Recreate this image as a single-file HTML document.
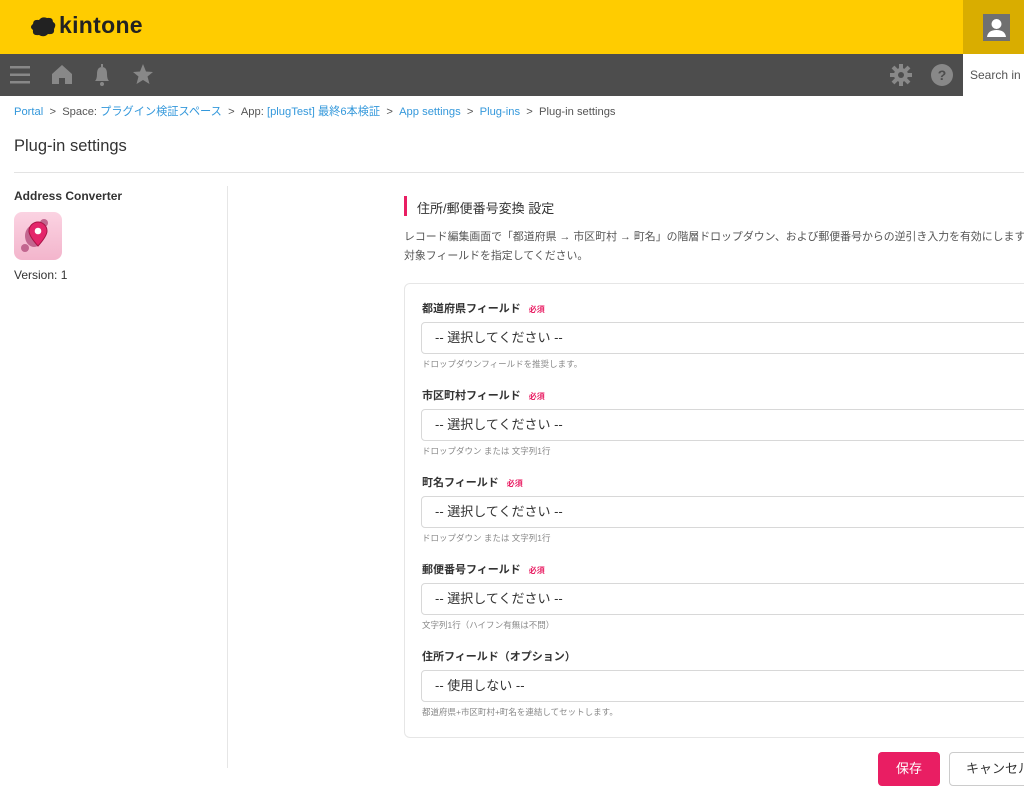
<!DOCTYPE html>
<html><head><meta charset="utf-8"><style>
*{margin:0;padding:0;box-sizing:border-box}
body{width:1024px;height:768px;overflow:hidden;background:#fff;font-family:"Liberation Sans","Noto Sans CJK JP",sans-serif;color:#333;position:relative}
.abs{position:absolute}
a{color:#3498db;text-decoration:none}
.lbl{position:absolute;left:422px;font-size:11px;font-weight:bold;color:#333}
.req{color:#e91e63;font-size:8px;margin-left:8px;font-weight:bold}
.sel{position:absolute;left:421px;width:620px;height:32px;border:1px solid #d8d8d8;border-radius:4px;font-size:13px;padding-left:13px;line-height:30px;color:#333}
.hint{position:absolute;left:422px;font-size:8.5px;color:#888}
</style></head><body>
<div class="abs" style="left:0;top:0;width:1024px;height:54px;background:#ffcc00"></div>
<div class="abs" style="left:963px;top:0;width:61px;height:54px;background:#d9ad00"></div>
<div class="abs" style="left:983px;top:14px;width:27px;height:27px;background:#707070"></div>
<svg class="abs" style="left:983px;top:14px" width="27" height="27"><circle cx="13.5" cy="10" r="5" fill="#fff"/><path d="M4 23 Q5 16 13.5 16 Q22 16 23 23Z" fill="#fff"/></svg>
<svg class="abs" style="left:29px;top:16px" width="28" height="22"><path d="M4 8 Q4 3 10 4 Q13 0 18 2 Q24 1 24 6 Q28 8 25 13 Q26 19 19 18 Q15 22 10 19 Q3 20 4 14 Q0 11 4 8Z" fill="#222"/></svg>
<div class="abs" style="left:59px;top:12px;font-size:23px;font-weight:bold;color:#222;letter-spacing:0.3px">kintone</div>
<div class="abs" style="left:0;top:54px;width:963px;height:42px;background:#4d4d4d"></div>
<div class="abs" style="left:963px;top:55px;width:61px;height:40px;background:#fff;font-size:12px;color:#555;padding:13px 0 0 7px;white-space:nowrap;overflow:hidden">Search in</div>
<svg class="abs" style="left:0;top:54px" width="170" height="42" fill="#888">
<rect x="10" y="12" width="20" height="2.5"/><rect x="10" y="19.5" width="20" height="2.5"/><rect x="10" y="27" width="20" height="2.5"/>
<path d="M52 20 L62 11 L72 20 L72 30 L65 30 L65 24 L59 24 L59 30 L52 30Z"/>
<path d="M95 27 Q97 25 97 20 Q97 13 102 13 Q107 13 107 20 Q107 25 109 27Z"/><circle cx="102" cy="30" r="2"/><rect x="101" y="10" width="2" height="3"/>
<path d="M143 10 L146 17.5 L153 18 L147.5 22.5 L149.5 30 L143 26 L136.5 30 L138.5 22.5 L133 18 L140 17.5Z"/>
</svg>
<svg class="abs" style="left:888px;top:62px" width="70" height="26" fill="#888">
<circle cx="13" cy="13" r="7"/><g stroke="#888" stroke-width="4"><line x1="13" y1="2" x2="13" y2="24"/><line x1="2" y1="13" x2="24" y2="13"/><line x1="5" y1="5" x2="21" y2="21"/><line x1="21" y1="5" x2="5" y2="21"/></g><circle cx="13" cy="13" r="3" fill="#4d4d4d"/>
<circle cx="54" cy="13" r="11"/><text x="54" y="18" text-anchor="middle" font-size="14" font-weight="bold" fill="#4d4d4d" font-family="Liberation Sans">?</text>
</svg>
<div class="abs" style="left:14px;top:103px;font-size:11.2px;color:#555;white-space:nowrap"><a>Portal</a> &nbsp;&gt;&nbsp; Space: <a>プラグイン検証スペース</a> &nbsp;&gt;&nbsp; App: <a>[plugTest] 最終6本検証</a> &nbsp;&gt;&nbsp; <a>App settings</a> &nbsp;&gt;&nbsp; <a>Plug-ins</a> &nbsp;&gt;&nbsp; Plug-in settings</div>
<div class="abs" style="left:14px;top:137px;font-size:16.5px;color:#333">Plug-in settings</div>
<div class="abs" style="left:14px;top:172px;width:1010px;height:1px;background:#e3e3e3"></div>
<div class="abs" style="left:14px;top:189px;font-size:12px;font-weight:bold;color:#333">Address Converter</div>
<div class="abs" style="left:14px;top:212px;width:48px;height:48px;border-radius:8px;background:linear-gradient(#fbd3e2,#f3b5cc)"></div>
<svg class="abs" style="left:14px;top:212px" width="48" height="48"><circle cx="30" cy="11" r="4" fill="#c2668f"/><circle cx="11" cy="36" r="4" fill="#c2668f"/><ellipse cx="20" cy="24" rx="9" ry="11" fill="#c2668f"/><path d="M24 34 Q15 24 15 19 A9 9 0 0 1 33 19 Q33 24 24 34Z" fill="#e4266b" stroke="#a81446" stroke-width="1"/><circle cx="24" cy="19" r="3.3" fill="#fff"/></svg>
<div class="abs" style="left:14px;top:268px;font-size:12px;color:#333">Version: 1</div>
<div class="abs" style="left:227px;top:186px;width:1px;height:582px;background:#e6e6e6"></div>
<div class="abs" style="left:404px;top:196px;width:3px;height:20px;background:#e91e63"></div>
<div class="abs" style="left:417px;top:198px;font-size:13px;color:#333">住所/郵便番号変換 設定</div>
<div class="abs" style="left:404px;top:228px;font-size:10.9px;color:#555;line-height:19px;white-space:nowrap">レコード編集画面で「都道府県 → 市区町村 → 町名」の階層ドロップダウン、および郵便番号からの逆引き入力を有効にします。<br>対象フィールドを指定してください。</div>
<div class="abs" style="left:404px;top:283px;width:640px;height:455px;border:1px solid #e6e6e6;border-radius:6px"></div>

<div class="lbl" style="top:300px">都道府県フィールド<span class="req">必須</span></div>
<div class="sel" style="top:322px">-- 選択してください --</div>
<div class="hint" style="top:358px">ドロップダウンフィールドを推奨します。</div>

<div class="lbl" style="top:387px">市区町村フィールド<span class="req">必須</span></div>
<div class="sel" style="top:409px">-- 選択してください --</div>
<div class="hint" style="top:445px">ドロップダウン または 文字列1行</div>

<div class="lbl" style="top:474px">町名フィールド<span class="req">必須</span></div>
<div class="sel" style="top:496px">-- 選択してください --</div>
<div class="hint" style="top:532px">ドロップダウン または 文字列1行</div>

<div class="lbl" style="top:561px">郵便番号フィールド<span class="req">必須</span></div>
<div class="sel" style="top:583px">-- 選択してください --</div>
<div class="hint" style="top:619px">文字列1行（ハイフン有無は不問）</div>

<div class="lbl" style="top:648px">住所フィールド（オプション）</div>
<div class="sel" style="top:670px">-- 使用しない --</div>
<div class="hint" style="top:706px">都道府県+市区町村+町名を連結してセットします。</div>

<div class="abs" style="left:878px;top:752px;width:62px;height:34px;background:#e91e63;border-radius:4px;color:#fff;font-size:13px;text-align:center;line-height:34px">保存</div>
<div class="abs" style="left:949px;top:752px;width:90px;height:34px;border:1px solid #ccc;border-radius:4px;color:#333;font-size:13px;padding-left:16px;line-height:32px">キャンセル</div>
</body></html>
